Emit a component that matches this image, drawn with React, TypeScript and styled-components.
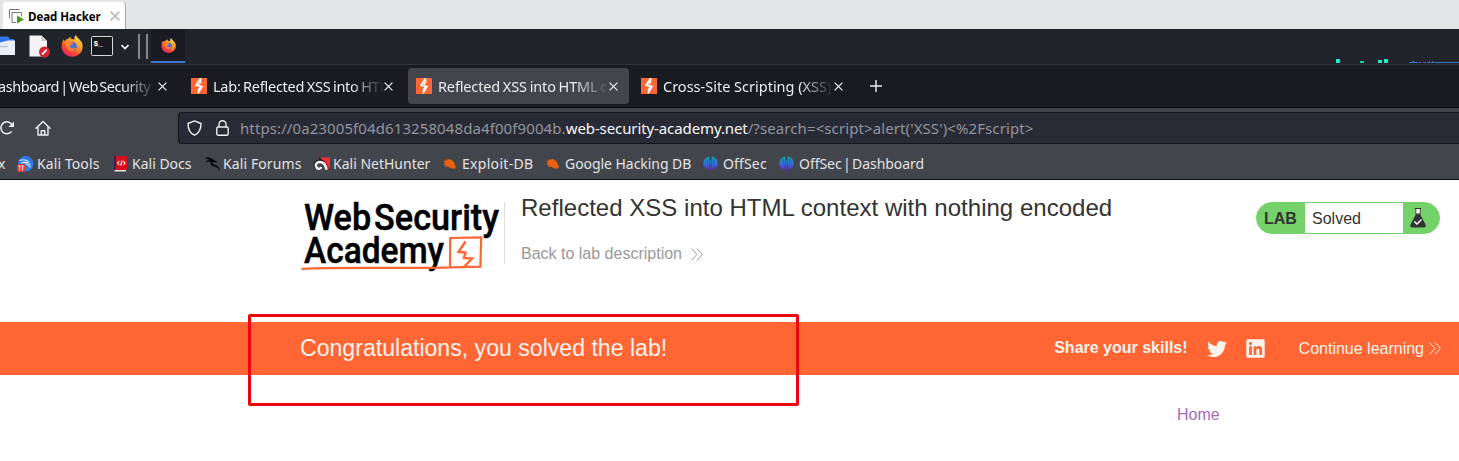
import React from 'react';
import styled, { createGlobalStyle } from 'styled-components';
import { FaTwitter, FaLinkedin } from 'react-icons/fa';

const Global = createGlobalStyle`
  *, *::before, *::after { box-sizing: border-box; }
  body { margin: 0; background: #fff; overflow: hidden; }
  svg { display: block; flex: none; }
`;

const Screen = styled.div`
  position: relative;
  width: 1459px;
  height: 461px;
  overflow: hidden;
  background: #fff;
  font-family: "Liberation Sans", Arial, sans-serif;
`;

/* ---- virtual machine tabs ---- */
const VmBar = styled.div`
  display: flex;
  height: 29px;
  padding: 2px 0 0 3px;
  background: #e4e5e7;
`;
const VmTab = styled.div`
  display: flex;
  align-items: center;
  width: 123px;
  height: 27px;
  padding: 1px 5px 0 6px;
  background: #fff;
  border-right: 1px solid #a5a6a8;
  border-radius: 3px 4px 0 0;
`;
const VmTitle = styled.span`
  width: 73px;
  margin: 0 9px 0 3px;
  font: bold 11.5px "Open Sans", sans-serif;
  letter-spacing: -0.05px;
  white-space: nowrap;
  color: #000;
`;

/* ---- desktop panel ---- */
const Panel = styled.div`
  display: flex;
  justify-content: space-between;
  height: 36px;
  background: #22242c;
  border-bottom: 1px solid #30323a;
`;
const Launchers = styled.div`
  display: flex;
  align-items: flex-start;
`;
const Slot = styled.div<{ $left: number; $top: number }>`
  margin-left: ${(p) => p.$left}px;
  margin-top: ${(p) => p.$top}px;
`;
const ActiveApp = styled.div`
  display: flex;
  justify-content: center;
  width: 34px;
  height: 34px;
  margin-left: 3px;
  padding-top: 9px;
  background: #1a1b22;
  border-bottom: 2px solid #4274d2;
`;

/* ---- browser chrome ---- */
const TabStrip = styled.div`
  display: flex;
  align-items: flex-start;
  height: 43px;
  padding-top: 3px;
  background: #1a1b20;
  border-bottom: 1px solid #08090c;
  font-family: "Noto Sans", sans-serif;
`;
const Tab = styled.div<{ $width: number; $pad: number; $gap?: number; $active?: boolean }>`
  display: flex;
  align-items: center;
  width: ${(p) => p.$width}px;
  height: 36px;
  margin-right: ${(p) => p.$gap ?? 0}px;
  padding-left: ${(p) => p.$pad}px;
  border-radius: 4px;
  background: ${(p) => (p.$active ? '#42454b' : 'transparent')};
`;
const TabTitle = styled.span<{ $width: number; $indent?: number; $track: number; $words?: number; $fade: number }>`
  width: ${(p) => p.$width}px;
  margin-left: ${(p) => p.$indent ?? 0}px;
  overflow: hidden;
  white-space: nowrap;
  font-size: 14.5px;
  line-height: 22px;
  letter-spacing: ${(p) => p.$track}px;
  word-spacing: ${(p) => p.$words ?? 0}px;
  color: #ececee;
  mask-image: linear-gradient(to left, transparent, #000 ${(p) => p.$fade}px);
`;
const NavBar = styled.div`
  display: flex;
  align-items: center;
  height: 40px;
  background: #42454b;
`;
const UrlBar = styled.div`
  display: flex;
  align-items: center;
  flex: 1;
  height: 32px;
  margin-left: 127px;
  padding-left: 8px;
  background: #282a35;
  border: 1px solid #14151b;
  border-right: 0;
  border-radius: 4px 0 0 4px;
`;
const Url = styled.span`
  margin-left: 11px;
  font: 15px/22px "Noto Sans", sans-serif;
  white-space: nowrap;
  color: #93959c;
`;
const UrlPart = styled.span<{ $track: number; $strong?: boolean }>`
  letter-spacing: ${(p) => p.$track}px;
  color: ${(p) => (p.$strong ? '#fafafc' : 'inherit')};
`;
const Bookmarks = styled.div`
  display: flex;
  align-items: center;
  height: 32px;
  background: #42454b;
  border-bottom: 1px solid #08090c;
  font: 14px/22px "Noto Sans", sans-serif;
  color: #e2e3e5;
`;
const Bookmark = styled.div<{ $width: number; $gap: number; $track: number; $words?: number }>`
  display: flex;
  align-items: center;
  gap: ${(p) => p.$gap}px;
  width: ${(p) => p.$width}px;
  letter-spacing: ${(p) => p.$track}px;
  word-spacing: ${(p) => p.$words ?? 0}px;
  white-space: nowrap;
`;

/* ---- page ---- */
const Header = styled.header`
  display: flex;
  height: 142px;
  padding: 0 19px 0 300px;
`;
const Titles = styled.div`
  flex: 1;
  height: 62px;
  margin-top: 22px;
  padding-left: 16px;
  border-left: 1px solid #dedede;
`;
const Title = styled.h1`
  margin: -8px 0 0;
  font-size: 24px;
  line-height: 28px;
  letter-spacing: 0.02px;
  font-weight: 400;
  color: #333332;
`;
const BackLink = styled.div`
  display: flex;
  align-items: center;
  gap: 9px;
  margin-top: 21px;
  font-size: 16px;
  line-height: 22px;
  color: #999;
`;
const LabBadge = styled.div`
  display: flex;
  align-items: center;
  width: 184px;
  height: 32px;
  margin-top: 22px;
  overflow: hidden;
  border: 1px solid #75d26b;
  border-radius: 16px;
  background: #75d26b;
  color: #333332;
  font-size: 16px;
`;
const LabTag = styled.span`
  width: 48px;
  padding: 2px 0 0 7px;
  font-weight: 700;
`;
const LabState = styled.span`
  width: 98px;
  height: 30px;
  padding-left: 7px;
  line-height: 31px;
  background: #fff;
`;
const Banner = styled.div`
  display: flex;
  align-items: center;
  height: 53px;
  padding: 0 18px 0 300px;
  background: #ff6633;
  color: #fff3ec;
  font-size: 16px;
`;
const Congrats = styled.p`
  flex: 1;
  margin: 0 0 2px;
  font-size: 23.1px;
  line-height: 28px;
`;
const Share = styled.div`
  display: flex;
  align-items: center;
  gap: 18px;
  margin-right: 33px;
  font-weight: 700;
`;
const ShareLabel = styled.span`
  margin: 0 1px 2px -1px;
`;
const Continue = styled.div`
  display: flex;
  align-items: center;
  gap: 5px;
`;
const PageNav = styled.nav`
  display: flex;
  padding: 30px 0 0 1177px;
  font-size: 16px;
  line-height: 20px;
  color: #a36cb8;
`;
const Highlight = styled.div`
  position: absolute;
  left: 248px;
  top: 314px;
  width: 551px;
  height: 92px;
  border: 3px solid #f0050c;
  border-radius: 2px;
`;

const Close = ({ size = 9, color = '#e8e8ea', w = 1.3 }: { size?: number; color?: string; w?: number }) => (
  <svg width={size} height={size} viewBox="0 0 9 9">
    <path d="M.6.6l7.8 7.8M8.4.6L.6 8.4" stroke={color} strokeWidth={w} fill="none" />
  </svg>
);

const Firefox = ({ size }: { size: number }) => (
  <svg width={size} height={size} viewBox="0 0 22 22">
    <defs>
      <linearGradient id="fox" x1=".85" y1=".05" x2=".25" y2=".95">
        <stop offset="0" stopColor="#ffe14a" />
        <stop offset=".4" stopColor="#ff9a2a" />
        <stop offset=".75" stopColor="#fb4638" />
        <stop offset="1" stopColor="#e32568" />
      </linearGradient>
    </defs>
    <path d="M2.6 4.2l1 2C4.6 4.6 6 3.8 7.200 3.700L9.500 1.800l.5 2.300c1.500-.2 2.700.2 3.600.7C13 3 13.600 1.200 15 0c.5 2.600 4.600 4.400 5.800 7.500 3 7.500-2.300 14.200-9.600 14.200C5 21.700.7 17.200.7 11.600c0-3.300.8-5.800 1.900-7.400z" fill="url(#fox)" />
    <circle cx="11.300" cy="11.400" r="4.600" fill="#4f6fd8" />
    <path d="M3.400 6.700c2-1.100 4.200-.7 6 .5l3 .7c-.4 1.600-2.200 1.700-3.100 2.600-.9 1 .2 3.200 2.500 3.100 1.300-.1 2-.9 3.200-.5-1.200 3-5.200 3.800-7.800 1.700C4.800 13 5.600 10 3.400 6.700z" fill="#ff8426" />
  </svg>
);

const Bolt = () => (
  <svg width="16" height="16" viewBox="0 0 16 16">
    <path d="M0 0h16v16H0z" fill="#ff6633" />
    <path d="M8.800 0h1.500v4.500L8.300 7l4 .9-4.600 7.600H6.500l.4-4.300 1.600-2.300-4.800-1.200z" fill="#fff" />
    <path d="M8.900 3.600L6.700 6.800l1.600.3" stroke="#ff6633" strokeWidth=".5" fill="none" />
  </svg>
);

const Chevrons = ({ color }: { color: string }) => (
  <svg width="12" height="13" viewBox="0 0 12 13">
    <path d="M.5.6l5.400 5.900L.5 12.400M6 .6l5.400 5.900L6 12.400" stroke={color} fill="none" />
  </svg>
);

const LogoBox = styled.div`
  width: 204px;
  margin-top: 20px;
`;
const Logo = () => (
  <LogoBox>
    <svg width="204" height="76" viewBox="300 200 204 76">
      <g fill="#000" stroke="#000" strokeWidth=".5" fontFamily="Roboto, sans-serif" fontWeight="500" fontSize="37">
        <text x="304" y="230.300" textLength="195" lengthAdjust="spacingAndGlyphs" wordSpacing="-6">Web Security</text>
        <text x="304" y="263" fontSize="36" textLength="140" lengthAdjust="spacingAndGlyphs">Academy</text>
      </g>
      <path d="M301.500 268.800c45-1.800 95 0 148.500-1.500l.2-29.300 31-.6-.8 29.300-30 .7" stroke="#ff6633" strokeWidth="2.200" fill="none" />
      <path d="M465.500 241.500l-7 10.500 7 .5-1.500 5.500 8 .5-8.500 9" stroke="#ff6633" strokeWidth="2.400" fill="none" />
    </svg>
  </LogoBox>
);

const ToolsIcon = () => (
  <svg width="17" height="16" viewBox="0 0 17 16">
    <circle cx="8.700" cy="7.800" r="7.700" fill="#2a7be8" />
    <path d="M2.500 4.500c4-1.500 7-.5 9 1.200M4 7.200c3-1.500 7-1.300 9.500 1.500M8 6.500c1 2.500 4 2 5.500 5" stroke="#dbe9ff" strokeWidth="1.200" fill="none" />
    <rect y="8" width="8" height="8" rx="2" fill="#e53935" />
    <path d="M1.500 10h2.300M2.700 10v4.500M4.500 10h2.300M5.700 10v4.500" stroke="#fff" strokeWidth=".9" />
  </svg>
);
const DocsIcon = () => (
  <svg width="13" height="16" viewBox="0 0 13 16">
    <path d="M0 0h13v14H0z" fill="#d5101c" />
    <path d="M0 0h1.700v14H0z" fill="#301a58" />
    <path d="M.5 14H12v1.500H.5z" fill="#ece5e6" />
    <path d="M5.300 5L3.500 7l1.800 2M9.300 5l1.800 2-1.800 2M8 4.500L6.700 9.500" stroke="#fff" strokeWidth="1.100" fill="none" />
  </svg>
);
const DragonIcon = () => (
  <svg width="17" height="16" viewBox="0 0 17 16">
    <path d="M0 .8c4 .4 7.500.7 9.800 3.300l2.900 1.200-.2 1.300-3.300-.5c-1 1.700.6 2.600 2.600 3 2.300.6 4 2.500 4.200 6.500-1.200-3-2.300-4.300-4.500-4.700-3.400-.5-5.600-2-4.800-4.600C5 5 3 5.500 1 6.800 2 5 3.500 4 5.500 3.700 4 3 2 2.800.3 3.200 1.500 2.300 3 2 4.500 2.200 3 1.500 1.500 1.200 0 .8z" fill="#08090b" />
  </svg>
);
const HunterIcon = () => (
  <svg width="16" height="14" viewBox="0 0 16 14">
    <path d="M4 .5h12V12z" fill="#ef2f38" />
    <path d="M5 .5L15.500 12.500" stroke="#17181c" strokeWidth="1.200" />
    <path d="M13 12.500C12 6 8.500 3.200 4.800 3.800.8 4.500.2 9 2.500 11c2 1.700 5 .4 5.800-1.600" stroke="#17181c" strokeWidth="2.600" fill="none" />
    <path d="M10 5l4.500 7.500" stroke="#ef2f38" strokeWidth="1.500" />
    <path d="M12.500 12.800C11.500 7 8.500 4.500 5 5c-3.500.5-4 4-2.200 6 1.700 1.500 4 .6 4.800-1" stroke="#f6f6f6" strokeWidth="2.400" fill="none" />
  </svg>
);
const BugIcon = () => (
  <svg width="14" height="12" viewBox="0 0 14 12">
    <path d="M.5 3l2.300-.6.8-1.600 1.200 1L7 .7l.6 1.200 1.600-.3.300 1.400c1.500.7 2.300 2.500 2.600 4.700l1.700 1.600-2 .1.300 1.600-2-.8-1.400.8-.5-1.200c-1.300.1-2.500-.4-3.500-1.300L2 9l.6-1.700-2-.5L1.800 5z" fill="#e9610f" />
  </svg>
);
const OffsecIcon = () => (
  <svg width="15" height="16" viewBox="0 0 15 16">
    <defs>
      <linearGradient id="offs" x1="0" y1="0" x2="0" y2="1">
        <stop offset="0" stopColor="#16a3b5" />
        <stop offset=".5" stopColor="#316bd5" />
        <stop offset="1" stopColor="#6a1fc4" />
      </linearGradient>
    </defs>
    <path d="M6.400.5v13.500l-1-1V9.500l-1 3.800C1.500 12 .3 9.800.3 7.500.3 4 3 .8 6.400.5zM7 4h1v11.500H7zM8.600.5v13.500l1-1V9.500l1 3.800c3-1.300 4.200-3.500 4.200-5.800 0-3.500-2.700-6.700-6.200-7z" fill="url(#offs)" />
    <path d="M4 2.500V8M11 2.500V8" stroke="#35506f" strokeWidth=".6" />
  </svg>
);

const bookmarks = [
  { label: 'Kali Tools', icon: <ToolsIcon />, width: 97, gap: 3, track: 0.1 },
  { label: 'Kali Docs', icon: <DocsIcon />, width: 90, gap: 5, track: 0 },
  { label: 'Kali Forums', icon: <DragonIcon />, width: 110, gap: 2, track: 0.1 },
  { label: 'Kali NetHunter', icon: <HunterIcon />, width: 129, gap: 3, track: 0 },
  { label: 'Exploit-DB', icon: <BugIcon />, width: 103, gap: 5, track: 0.3 },
  { label: 'Google Hacking DB', icon: <BugIcon />, width: 157, gap: 5, track: -0.05 },
  { label: 'OffSec', icon: <OffsecIcon />, width: 76, gap: 5, track: 0.15 },
  { label: 'OffSec | Dashboard', icon: <OffsecIcon />, width: 160, gap: 5, track: -0.05, words: -2.2 },
];

export default function App() {
  return (
    <Screen>
      <Global />
      <VmBar>
        <VmTab>
          <svg width="16" height="15" viewBox="0 0 16 15">
            <path d="M.5 9.500v-9h10M3 13.500v-10h9.500v4M3 13.500h4" stroke="#77797b" fill="none" />
            <path d="M8 6.500l7 4-7 4z" fill="#4a9a20" />
          </svg>
          <VmTitle>Dead Hacker</VmTitle>
          <Close size={10} color="#bcbcbc" w={1.6} />
        </VmTab>
      </VmBar>

      <Panel>
        <Launchers>
          <Slot $left={0} $top={7}>
            <svg width="15" height="20" viewBox="0 0 15 20">
              <path d="M0 .5h8l2 2.500h4v5H0z" fill="#2d75e8" />
              <path d="M0 6.500l8-2h7V19H0z" fill="#e8eff8" />
              <path d="M0 10.500h8" stroke="#bfc6d0" strokeWidth="1.500" />
            </svg>
          </Slot>
          <Slot $left={14} $top={6}>
            <svg width="21" height="23" viewBox="0 0 21 23">
              <path d="M.5.500h12L18 6v15.500H.5z" fill="#f3f3f5" />
              <path d="M12.500.5V6H18z" fill="#c9cace" />
              <circle cx="15.500" cy="17" r="5.500" fill="#d42530" />
              <path d="M13.200 19.300l4.500-4.600" stroke="#fff" strokeWidth="1.800" />
            </svg>
          </Slot>
          <Slot $left={11} $top={6}><Firefox size={22} /></Slot>
          <Slot $left={8} $top={7}>
            <svg width="22" height="20" viewBox="0 0 22 20">
              <rect x=".5" y=".5" width="21" height="19" rx="1" fill="#18191d" stroke="#d6d8dc" />
              <text x="2.500" y="9.500" fill="#fff" fontFamily="Liberation Mono, monospace" fontWeight="700" fontSize="8">$_</text>
            </svg>
          </Slot>
          <Slot $left={8} $top={15}>
            <svg width="8" height="6" viewBox="0 0 8 6"><path d="M.5 1L4 4.500 7.500 1" stroke="#eee" strokeWidth="1.700" fill="none" /></svg>
          </Slot>
          <Slot $left={9} $top={5}>
            <svg width="10" height="25" viewBox="0 0 10 25"><path d="M1 0v25M9 0v25" stroke="#85878d" strokeWidth="2" /></svg>
          </Slot>
          <ActiveApp><Firefox size={15} /></ActiveApp>
        </Launchers>
        <Slot $left={0} $top={28}>
          <svg width="125" height="7" viewBox="0 0 125 7">
            <path d="M2 2h4v4H2zM44 3h4v3h-4zM50 2h4v4h-4z" fill="#25e8cb" />
            <path d="M26 5h4" stroke="#25c9a8" strokeWidth="2" />
            <path d="M75 5.500h9M85 5.500h2M89 5.500h3M93 5.500h3M97 5.500h28M78 4.500h2M95 4.500h1M98 4.500h1" stroke="#3b70c8" />
          </svg>
        </Slot>
      </Panel>

      <TabStrip>
        <Tab $width={183} $pad={0}>
          <TabTitle $width={160} $indent={-2} $track={-0.45} $words={-2} $fade={36}>ashboard | Web Security</TabTitle>
          <Close />
        </Tab>
        <Tab $width={217} $pad={8} $gap={8}>
          <Bolt />
          <TabTitle $width={171} $indent={6} $track={-0.25} $words={-1} $fade={34}>Lab: Reflected XSS into HTML</TabTitle>
          <Close />
        </Tab>
        <Tab $width={221} $pad={8} $gap={4} $active>
          <Bolt />
          <TabTitle $width={171} $indent={6} $track={-0.15} $words={-0.8} $fade={34}>Reflected XSS into HTML con</TabTitle>
          <Close />
        </Tab>
        <Tab $width={229} $pad={8}>
          <Bolt />
          <TabTitle $width={171} $indent={6} $track={0} $fade={34}>Cross-Site Scripting (XSS)</TabTitle>
          <Close />
        </Tab>
        <Tab $width={20} $pad={8}>
          <svg width="12" height="12" viewBox="0 0 12 12"><path d="M6 0v12M0 6h12" stroke="#f0f0f2" strokeWidth="1.400" /></svg>
        </Tab>
      </TabStrip>

      <NavBar>
        <svg width="15" height="16" viewBox="0 0 15 16">
          <path d="M11.600 11.500A6 6 0 1 1 12.200 5" stroke="#f0f0f2" strokeWidth="1.500" fill="none" />
          <path d="M14 1.500V7H8.500z" fill="#f0f0f2" />
        </svg>
        <Slot $left={20} $top={0}>
          <svg width="16" height="16" viewBox="0 0 16 16">
            <path d="M1 8.300L8 1.400l7 6.900M3 7v8h10V7M6.300 15v-4.300h3.400V15" stroke="#f0f0f2" strokeWidth="1.400" strokeLinejoin="round" strokeLinecap="round" fill="none" />
          </svg>
        </Slot>
        <UrlBar>
          <svg width="15" height="16" viewBox="0 0 15 16">
            <path d="M7.500.9l6.500 2.600c0 5.500-2 9.800-6.500 11.700C3 13.300 1 9 1 3.500z" stroke="#f0f0f2" strokeWidth="1.400" strokeLinejoin="round" fill="none" />
          </svg>
          <Slot $left={14} $top={0}>
            <svg width="13" height="16" viewBox="0 0 13 16">
              <rect x=".8" y="7" width="11.400" height="8.200" rx="1.500" stroke="#f0f0f2" strokeWidth="1.400" fill="none" />
              <path d="M3 7V4.300a3.500 3.500 0 0 1 7 0V7" stroke="#f0f0f2" strokeWidth="1.400" fill="none" />
            </svg>
          </Slot>
          <Url>
            <UrlPart $track={0.1}>https://0a23005f04d613258048da4f00f9004b.</UrlPart>
            <UrlPart $track={-0.1} $strong>web-security-academy.net</UrlPart>
            <UrlPart $track={0.1}>{"/?search=<script>alert('XSS')<%2Fscript>"}</UrlPart>
          </Url>
        </UrlBar>
      </NavBar>

      <Bookmarks>
        <Slot $left={-2} $top={0}>
          <Bookmark $width={19} $gap={0} $track={0}>x</Bookmark>
        </Slot>
        {bookmarks.map((b) => (
          <Bookmark key={b.label} $width={b.width} $gap={b.gap} $track={b.track} $words={b.words}>
            {b.icon}
            {b.label}
          </Bookmark>
        ))}
      </Bookmarks>

      <Header>
        <Logo />
        <Titles>
          <Title>Reflected XSS into HTML context with nothing encoded</Title>
          <BackLink>Back to lab description <Chevrons color="#999" /></BackLink>
        </Titles>
        <LabBadge>
          <LabTag>LAB</LabTag>
          <LabState>Solved</LabState>
          <Slot $left={7} $top={0}>
            <svg width="16" height="20" viewBox="0 0 16 20">
              <path d="M5.500 1v6L.5 16.500Q-.3 19.500 2 19.500h12q2.300 0 1.500-3L10.500 7V1z" fill="#333332" />
              <path d="M6.300 1h3.400v4.500H6.300z" fill="#fff" />
              <path d="M4.800.5h6.400" stroke="#333332" />
              <path d="M4.300 13.500l2.700 2.600 4.500-4.500" stroke="#fff" strokeWidth="1.400" fill="none" />
            </svg>
          </Slot>
        </LabBadge>
      </Header>

      <Banner>
        <Congrats>Congratulations, you solved the lab!</Congrats>
        <Share>
          <ShareLabel>Share your skills!</ShareLabel>
          <FaTwitter size={20} />
          <FaLinkedin size={21} />
        </Share>
        <Continue>Continue learning <Chevrons color="#fff3ec" /></Continue>
      </Banner>

      <PageNav>Home</PageNav>
      <Highlight />
    </Screen>
  );
}
